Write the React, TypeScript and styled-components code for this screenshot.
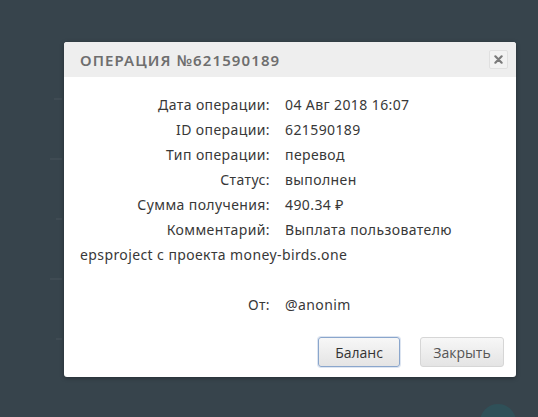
import React from "react";
import styled, { createGlobalStyle } from "styled-components";

const Global = createGlobalStyle`
  html, body { margin: 0; padding: 0; }
  body {
    width: 538px;
    height: 417px;
    overflow: hidden;
    background: #37444c;
    font-family: "Noto Sans", "DejaVu Sans", sans-serif;
  }
`;

const Page = styled.div`
  position: relative;
  width: 538px;
  height: 417px;
  display: flex;
  align-items: flex-start;
  overflow: hidden;
`;

const Rail = styled.div`
  width: 64px;
  padding-top: 88px;
  display: flex;
  flex-direction: column;
  align-items: flex-end;
  gap: 48px;
  box-sizing: border-box;
`;

const RailMark = styled.span<{ $w: number }>`
  display: block;
  width: ${(p) => p.$w}px;
  height: 10px;
  margin-right: 2px;
  border-bottom: 2px solid #3f4b53;
`;

const Modal = styled.div`
  margin-top: 42px;
  width: 452px;
  height: 335px;
  background: #ffffff;
  border-radius: 3px;
  box-shadow: 0 1px 4px rgba(0, 0, 0, 0.35);
  display: flex;
  flex-direction: column;
  overflow: hidden;
`;

const Header = styled.div`
  height: 35px;
  background: #eeeeee;
  display: flex;
  align-items: center;
  justify-content: space-between;
  padding: 0 8px 0 16px;
`;

const Title = styled.h3`
  margin: 0;
  font-family: "Noto Sans", sans-serif;
  font-weight: 600;
  font-size: 15px;
  letter-spacing: 1.1px;
  color: #6e6e6e;
`;

const CloseBtn = styled.button`
  width: 19px;
  height: 19px;
  padding: 0;
  border: 1px solid #e0e0e0;
  border-radius: 2px;
  background: #f2f2f2;
  display: flex;
  align-items: center;
  justify-content: center;
  cursor: pointer;
`;

const Body = styled.div`
  flex: 1;
  padding: 15px 16px 0 16px;
  font-size: 14px;
  letter-spacing: 0.4px;
  line-height: 25px;
  color: #383838;
`;

const Line = styled.div`
  min-height: 25px;
`;

const Label = styled.span`
  display: inline-block;
  width: 190px;
  margin-right: 15px;
  text-align: right;
`;

const Footer = styled.div`
  display: flex;
  justify-content: flex-end;
  gap: 20px;
  padding: 0 12px 10px 0;
`;

const Button = styled.button<{ $focused?: boolean; $w: number }>`
  width: ${(p) => p.$w}px;
  height: 30px;
  padding: 0;
  font-family: "Open Sans", "Noto Sans", sans-serif;
  font-size: 14px;
  color: ${(p) => (p.$focused ? "#333" : "#555")};
  background: linear-gradient(#f7f7f7, #e4e4e4);
  border: 1px solid ${(p) => (p.$focused ? "#8aa6cc" : "#d6d6d6")};
  border-radius: 3px;
  box-shadow: ${(p) => (p.$focused ? "0 0 0 1px rgba(120,150,200,0.25)" : "none")};
  cursor: pointer;
`;

const Fab = styled.div`
  position: absolute;
  left: 480px;
  top: 404px;
  width: 36px;
  height: 36px;
  border-radius: 50%;
  background: #2f5058;
`;

const rows: [string, string][] = [
  ["Дата операции:", "04 Авг 2018 16:07"],
  ["ID операции:", "621590189"],
  ["Тип операции:", "перевод"],
  ["Статус:", "выполнен"],
  ["Сумма получения:", "490.34 ₽"],
  ["Комментарий:", "Выплата пользователю epsproject с проекта money-birds.one"],
];

export default function App() {
  return (
    <Page>
      <Global />
      <Rail>
        <RailMark $w={8} />
        <RailMark $w={12} />
        <RailMark $w={6} />
        <RailMark $w={12} />
        <RailMark $w={6} />
      </Rail>
      <Modal>
        <Header>
          <Title>ОПЕРАЦИЯ №621590189</Title>
          <CloseBtn aria-label="close">
            <svg width="9" height="9" viewBox="0 0 10 10">
              <path d="M1.5 1.5 L8.5 8.5 M8.5 1.5 L1.5 8.5" stroke="#7a7a7a" strokeWidth="2.4" strokeLinecap="round" />
            </svg>
          </CloseBtn>
        </Header>
        <Body>
          {rows.map(([l, v]) => (
            <Line key={l}>
              <Label>{l}</Label>
              {v}
            </Line>
          ))}
          <Line />
          <Line>
            <Label>От:</Label>
            @anonim
          </Line>
        </Body>
        <Footer>
          <Button $focused $w={82}>Баланс</Button>
          <Button $w={84}>Закрыть</Button>
        </Footer>
      </Modal>
      <Fab />
    </Page>
  );
}
